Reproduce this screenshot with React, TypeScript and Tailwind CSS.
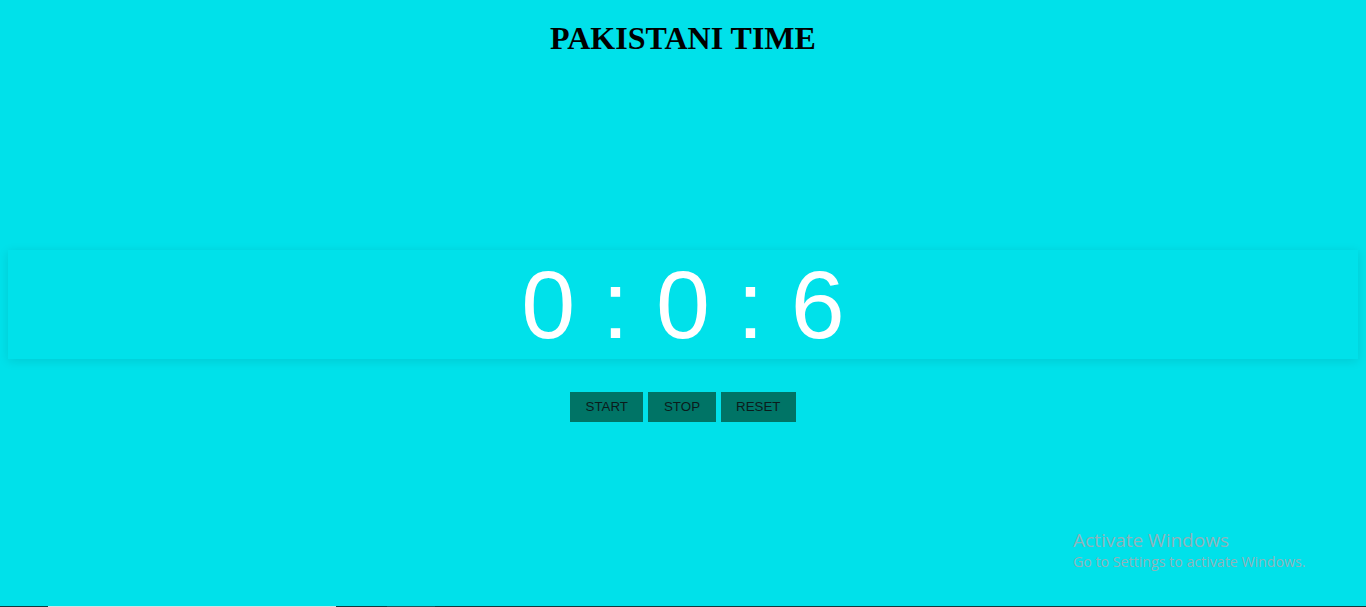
import React from "react";

export default function App() {
  return (
    <div className="relative min-h-[607px] w-full overflow-hidden bg-[#00e1ea]">
      <h1 className="pt-[14px] text-center font-['Liberation_Serif',serif] text-[32px] font-bold leading-normal text-black">
        PAKISTANI TIME
      </h1>

      <div className="mx-2 mt-[188px] flex h-[109px] items-center justify-center bg-[#00e1ea] shadow-[0_2px_10px_rgba(0,0,0,0.1)]">
        <span className="font-['Liberation_Sans',Arial,sans-serif] text-[97px] leading-none text-white">
          0 : 0 : 6
        </span>
      </div>

      <div className="mt-[33px] flex justify-center gap-[5px] font-['Liberation_Sans',Arial,sans-serif] text-[13.33px] text-[#0b1b1b]">
        <button className="h-[30px] bg-[#007466] px-[15.5px]">START</button>
        <button className="h-[30px] bg-[#007466] px-[15.5px]">STOP</button>
        <button className="h-[30px] bg-[#007466] px-[15.5px]">RESET</button>
      </div>

      {/* windows watermark overlay */}
      <div className="absolute left-[1073px] top-[527px] font-['Open_Sans','Noto_Sans',sans-serif] text-[#8fb3ba]">
        <div className="text-[19px] leading-[26px]">Activate Windows</div>
        <div className="text-[14.2px] leading-[18px]">Go to Settings to activate Windows.</div>
      </div>

      {/* taskbar edge */}
      <div className="absolute bottom-0 left-0 flex h-px w-full bg-[#123a3c]">
        <div className="w-[48px]" />
        <div className="w-[288px] bg-[#d5e0e2]" />
        <div className="w-[51px]" />
        <div className="w-[48px] bg-[#1f5558]" />
      </div>
    </div>
  );
}
